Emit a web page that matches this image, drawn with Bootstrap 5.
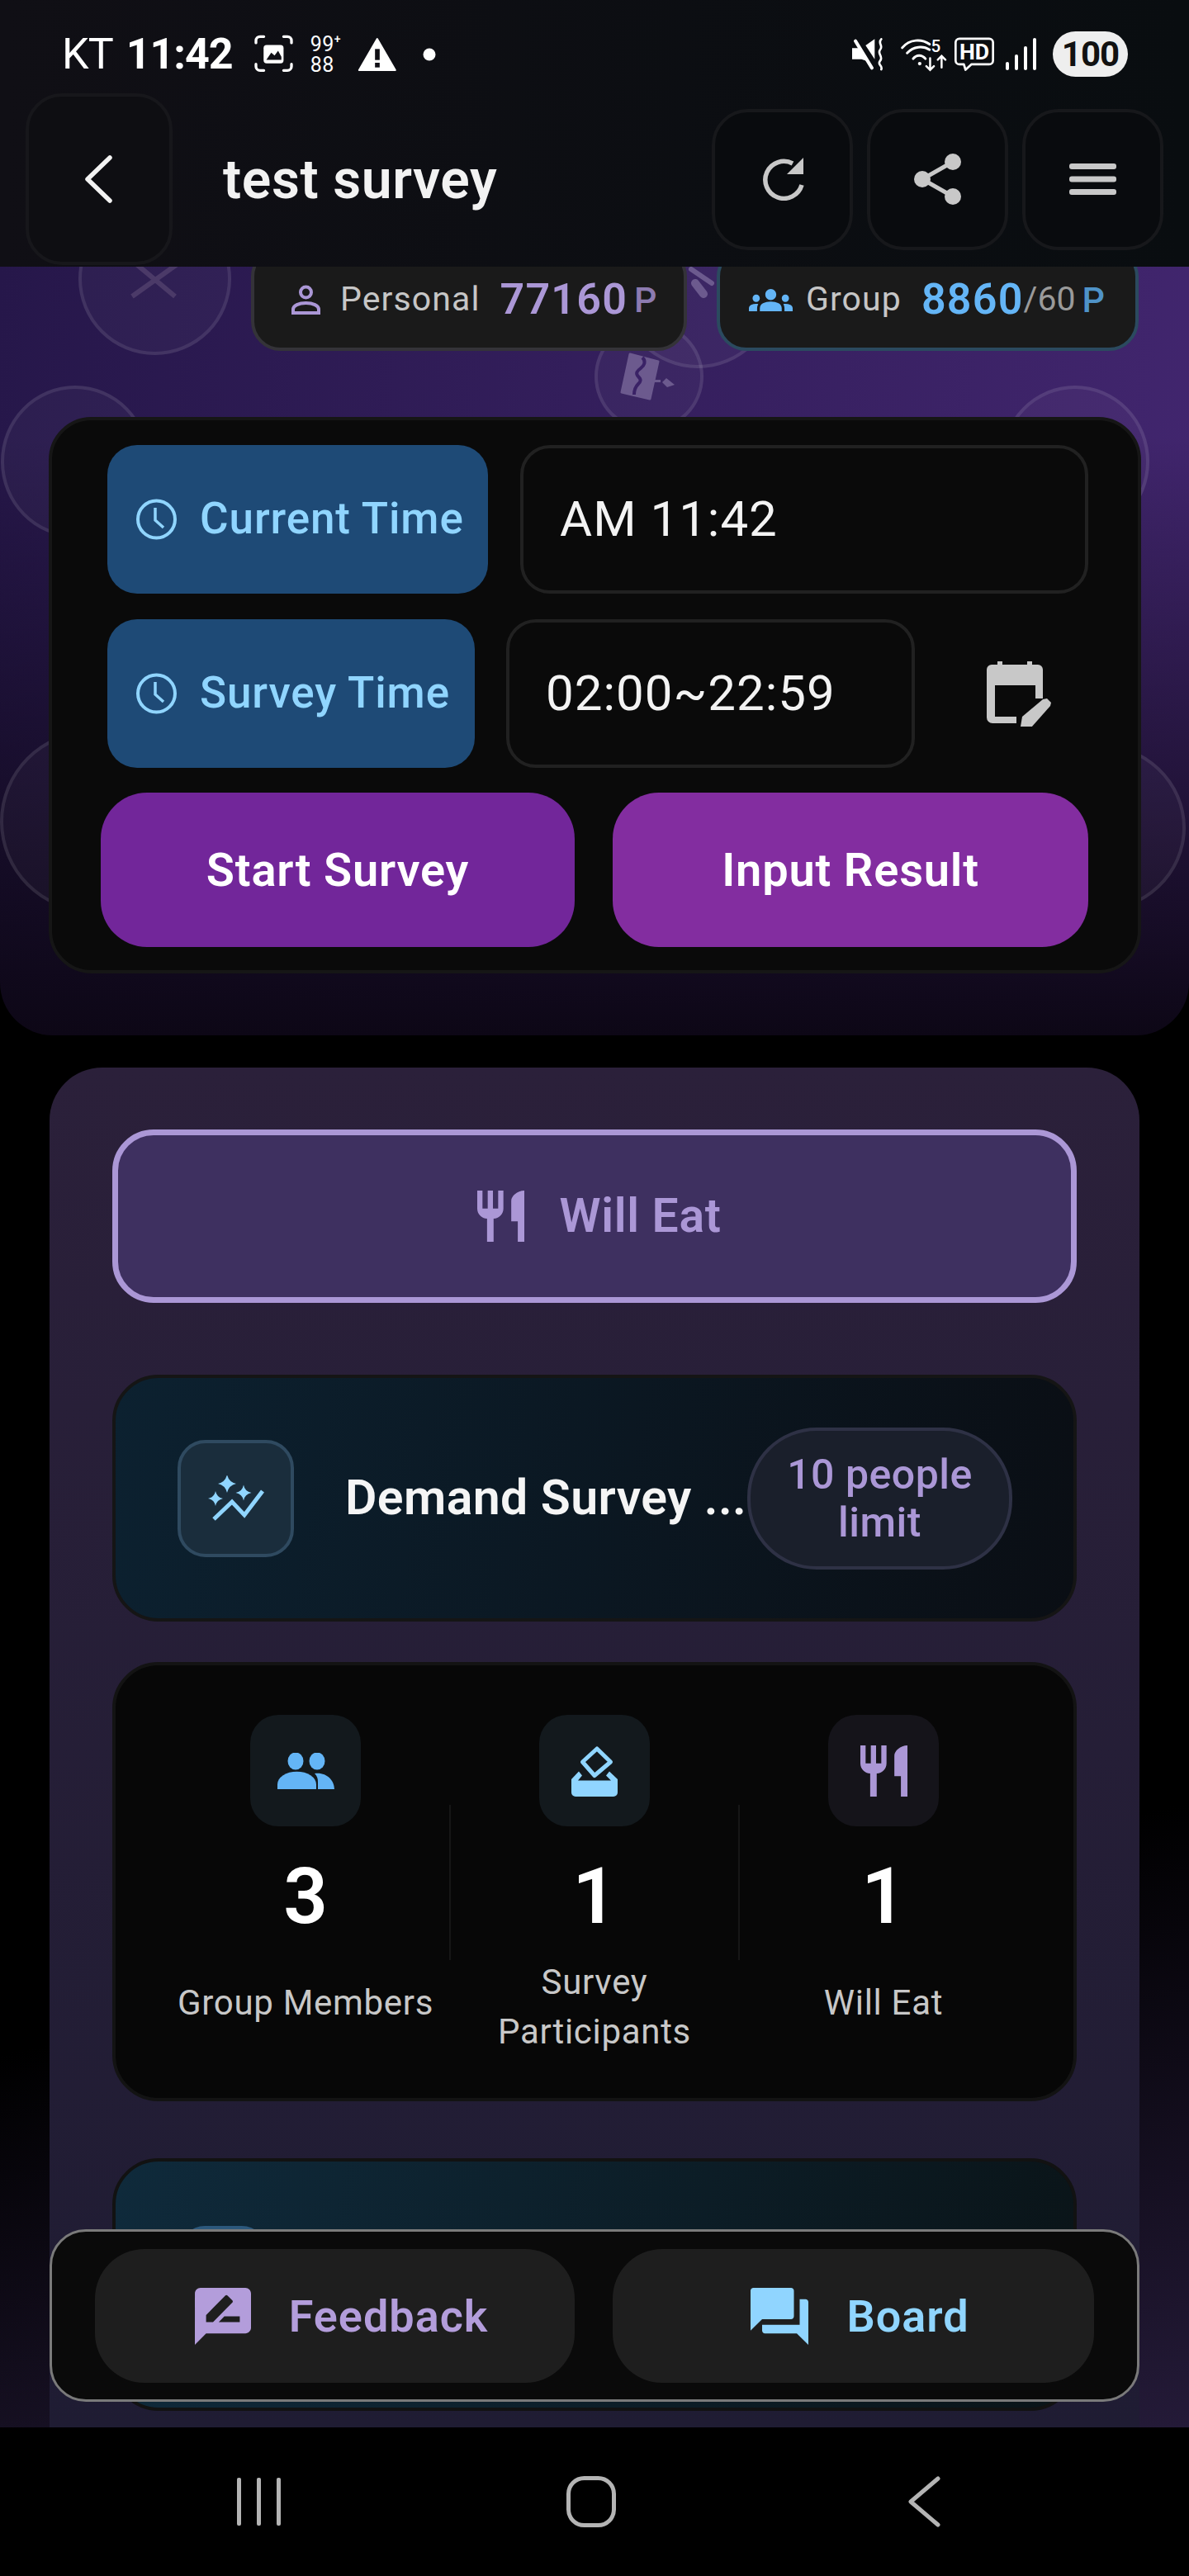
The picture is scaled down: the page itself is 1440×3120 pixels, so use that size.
<!DOCTYPE html>
<html lang="en">
<head>
<meta charset="UTF-8">
<meta name="viewport" content="width=device-width, initial-scale=1">
<title>test survey</title>
<link href="https://cdn.jsdelivr.net/npm/bootstrap@5.3.0/dist/css/bootstrap.min.css" rel="stylesheet">
<style>
    body { background: #000; font-family: Roboto, "Liberation Sans", sans-serif; margin: 0; }
    .screen { width: 1440px; height: 3120px; position: relative; overflow: hidden; background: #000; }

    /* top bar */
    .top-bar { height: 323px; flex-shrink: 0; position: relative; z-index: 5; background: linear-gradient(90deg, #100f15, #090d10); }
    .status-row { height: 113px; padding: 38px 74px 20px 75px; color: #fff; }
    .st-kt { font-size: 52px; font-weight: 400; line-height: 55px; margin-right: 16px; letter-spacing: -1px; }
    .st-time { font-size: 52px; font-weight: 700; line-height: 55px; letter-spacing: -1px; margin-right: 26px; }
    .st-count { font-size: 25px; line-height: 25px; width: 38px; margin: 0 19px 0 21px; letter-spacing: .5px; font-weight: 400; white-space: nowrap; }
    .st-count sup { font-size: 14px; font-weight: 500; top: -.7em; letter-spacing: 0; }
    .st-dot { margin-left: 31px; }
    .st-batt { width: 91px; height: 55px; border-radius: 28px; background: #eee; color: #111; font-size: 42px; font-weight: 700; letter-spacing: -1px; line-height: 55px; text-align: center; margin-left: 20px; }
    .title-row { height: 208px; padding: 0 31px; }
    .back-box { width: 178px; height: 208px; border: 4px solid #17171b; border-radius: 44px; background: #0e0e12; }
    .page-title { font-size: 66px; font-weight: 600; color: #f2f2f2; margin-left: 61px; letter-spacing: .6px; }
    .head-btns { gap: 17px; }
    .square-box { width: 171px; height: 171px; border: 4px solid #17181b; border-radius: 44px; background: #090b0e; }

    /* purple hero */
    .hero { height: 931px; position: relative; overflow: hidden; border-radius: 0 0 64px 64px;
        background: linear-gradient(to bottom, rgba(10,6,18,0) 22%, #0d0716 100%), linear-gradient(95deg, #26174a, #42266f); }
    .deco { position: absolute; border-radius: 50%; border: 4px solid rgba(255,255,255,.09); background: rgba(255,255,255,.03); }
    .deco-icon { position: absolute; }
    .point-row { position: relative; margin: -24px 0 0 304px; gap: 36px; }
    .point-pill { height: 126px; padding-top: 2px; border-radius: 36px; background: #1a1a1a; border: 4px solid #343338; }
    .pill-personal { width: 528px; padding-left: 45px; }
    .pill-group { width: 511px; padding-left: 35px; border-color: #2b4a5f; }
    .pill-label { font-size: 41px; color: #c6c6c6; letter-spacing: 1.1px; }
    .pill-num { font-size: 52px; font-weight: 600; letter-spacing: 1.2px; }
    .purple-txt { color: #ab97d6; }
    .blue-txt { color: #64b5f6; }
    .pill-unit { font-size: 43px; font-weight: 500; }
    .pill-limit { font-size: 41px; color: #9a9a9a; }

    .time-card { position: relative; width: 1323px; height: 674px; margin: 80px 0 0 59px; padding: 30px 60px 0 59px;
        background: #0a0a0a; border: 4px solid #161616; border-radius: 52px; }
    .time-chip { height: 180px; border-radius: 36px; background: #1e4a76; color: #90d5ff; font-size: 53px; font-weight: 500; letter-spacing: .9px; padding-left: 34px; gap: 27px; white-space: nowrap; }
    .time-val { height: 180px; border: 4px solid #212121; border-radius: 36px; color: #f3f3f3; font-size: 60px; letter-spacing: 1px; padding-left: 44px; }
    .action-btn { height: 187px; border: 0; border-radius: 56px; color: #fff; font-size: 56px; font-weight: 600; letter-spacing: .8px; }
    .action-btn:hover { color: #fff; }

    /* lower panel */
    .below { height: 1686px; flex-shrink: 0; background: linear-gradient(168deg, #000 62%, #241a38 100%); padding: 39px 0 0 60px; }
    .panel { width: 1320px; height: 1647px; padding: 75px 76px 0; border-radius: 64px 64px 0 0; background: linear-gradient(#2b203a, #1f1c33); }
    .eat-btn { height: 210px; padding-left: 24px; border: 7px solid #ab97d6; border-radius: 50px; background: #3e3060; color: #ab97d6; font-size: 57px; font-weight: 600; letter-spacing: .7px; gap: 42px; }
    .eat-btn:hover { color: #ab97d6; background: #3e3060; border-color: #ab97d6; }
    .demand-card { height: 299px; margin-top: 87px; padding: 0 75px; border: 4px solid #151515; border-radius: 56px; background: linear-gradient(100deg, #0c2130, #0a0e14); }
    .spark-box { width: 141px; height: 142px; border: 4px solid #2f4a60; border-radius: 34px; background: #1a2d3c; }
    .demand-title { width: 487px; margin-left: 62px; font-size: 59px; font-weight: 600; letter-spacing: .4px; color: #f5f5f5; white-space: nowrap; }
    .limit-pill { width: 321px; height: 172px; border: 4px solid #2e3145; border-radius: 84px; background: #1a1f2b; color: #ab97d6; font-size: 50px; font-weight: 500; letter-spacing: .5px; line-height: 58px; text-align: center; }
    .stats-card { height: 532px; margin-top: 49px; padding: 60px 56px 0; border: 4px solid #131313; border-radius: 56px; background: #070707; }
    .stat-col { width: 349px; }
    .stat-icon { width: 134px; height: 135px; border-radius: 34px; }
    .stat-num { height: 159px; font-size: 94px; font-weight: 600; color: #fff; line-height: 170px; }
    .stat-label { height: 120px; font-size: 42px; letter-spacing: .7px; line-height: 60px; color: #c8c8c8; text-align: center; }
    .stat-label.one-line { padding-bottom: 10px; }
    .stat-line { width: 2px; height: 188px; margin-top: 109px; background: #161616; flex-shrink: 0; }
    .next-card { height: 306px; margin-top: 69px; padding: 78px 0 0 78px; border: 4px solid #121212; border-radius: 56px; background: linear-gradient(100deg, #0f2a3b, #0a1418); }
    .next-box { width: 105px; height: 110px; border-radius: 30px; background: #2c587c; }

    /* floating bottom buttons */
    .float-bar { position: absolute; left: 60px; top: 2700px; width: 1320px; height: 209px; z-index: 4; padding: 21px 52px 0; gap: 46px; border: 3px solid #7a7a7a; border-radius: 44px; background: #0a0a0a; }
    .float-btn { height: 162px; padding-left: 28px; border: 0; border-radius: 60px; background: #1e1e1e; font-size: 54px; font-weight: 600; gap: 46px; letter-spacing: 1px; }
    .float-btn:hover { background: #1e1e1e; }
    .fb-purple, .fb-purple:hover { width: 581px; color: #b39ddb; }
    .fb-blue, .fb-blue:hover { width: 583px; color: #90d5ff; }
    .sys-nav { height: 180px; background: #000; padding: 0 301px 0 287px; }
</style>
</head>
<body>
<div class="screen d-flex flex-column">

    <div class="top-bar">
        <div class="status-row d-flex align-items-center">
            <span class="st-kt">KT</span>
            <span class="st-time">11:42</span>
            <svg class="flex-shrink-0" width="47" height="47" viewBox="18 40 142 142" fill="none" stroke="#fff" stroke-width="10" stroke-linecap="round">
                <path d="M24 70V62a15 15 0 0 1 15-15h14M125 47h14a15 15 0 0 1 15 15v8M154 148v8a15 15 0 0 1-15 15h-14M53 171H39a15 15 0 0 1-15-15v-8"/>
                <rect x="52" y="78" width="73" height="67" rx="11" fill="#fff" stroke="none"/>
                <path d="M62 132l18-26 12 10 13-17 12 22v11z" fill="#100f15" stroke="none"/>
            </svg>
            <span class="st-count">99<sup>+</sup><br>88</span>
            <svg class="flex-shrink-0" width="48" height="42" viewBox="395 42 143 126">
                <path d="M466 48L532 162H400z" fill="#fff" stroke="#fff" stroke-width="6" stroke-linejoin="round"/>
                <rect x="458" y="85" width="17" height="40" fill="#100f15"/><rect x="458" y="135" width="17" height="17" fill="#100f15"/>
            </svg>
            <svg class="st-dot flex-shrink-0" width="16" height="16" viewBox="0 0 16 16"><circle cx="8" cy="8" r="7.500" fill="#fff"/></svg>

            <div class="ms-auto d-flex align-items-center">
                <svg class="flex-shrink-0" style="margin-right:18px" width="42" height="40" viewBox="30 51 126 120" fill="#fff">
                    <path d="M36 88h26l28 47-20-7H36z"/>
                    <path d="M85 78l33-23v73z"/>
                    <path d="M48 62l60 98" stroke="#fff" stroke-width="12" stroke-linecap="round"/>
                    <path d="M142 55c-15 15 10 25-5 40-10 15 15 25 0 40-10 15 11 15 5 30" fill="none" stroke="#fff" stroke-width="8" stroke-linecap="round"/>
                </svg>
                <svg class="flex-shrink-0" style="margin-right:7px" width="58" height="42" viewBox="210 50 175 125" fill="none" stroke="#fff" stroke-width="9" stroke-linecap="round">
                    <path d="M218 88c27-33 72-33 100-13M236 107c24-25 58-27 82-12M258 128c12-16 32-16 45 0"/>
                    <circle cx="282" cy="146" r="6.500" fill="#fff" stroke="none"/>
                    <path d="M320 126v42M306 155l14 14 14-14M362 160v-40M348 132l14-14 14 14" stroke-width="7.500"/>
                    <text x="323" y="102" fill="#fff" stroke="none" font-size="62" font-weight="500" font-family="Roboto">5</text>
                </svg>
                <svg class="flex-shrink-0" style="margin-right:13px" width="50" height="42" viewBox="405 50 150 125" fill="none" stroke="#fff" stroke-width="8" stroke-linejoin="round">
                    <path d="M426 55h108a14 14 0 0 1 14 14v65a14 14 0 0 1-14 14h-64l-22 20-6-20h-16a14 14 0 0 1-14-14V69a14 14 0 0 1 14-14z"/>
                    <text x="480" y="129" text-anchor="middle" fill="#fff" stroke="none" font-size="80" font-weight="700" font-family="Roboto">HD</text>
                </svg>
                <svg class="flex-shrink-0" width="37" height="40" viewBox="0 0 37 40" fill="#fff">
                    <rect x="0" y="29" width="4" height="10" rx="2"/><rect x="11" y="20" width="4" height="19" rx="2"/><rect x="22" y="10" width="4" height="29" rx="2"/><rect x="33" y="0" width="4" height="39" rx="2"/>
                </svg>
                <div class="st-batt">100</div>
            </div>
        </div>
        <div class="title-row d-flex align-items-center">
            <div class="back-box d-flex align-items-center justify-content-center">
                <svg width="36" height="58" viewBox="0 0 36 58" fill="none" stroke="#f2f2f2" stroke-width="5.500" stroke-linecap="round" stroke-linejoin="round"><path d="M31 3L4 29l27 26"/></svg>
            </div>
            <div class="page-title">test survey</div>
            <div class="head-btns ms-auto d-flex">
                <div class="square-box d-flex align-items-center justify-content-center">
                    <svg width="52" height="52" viewBox="0 0 52 52" fill="none" stroke="#c8c8c8" stroke-width="5.500"><path d="M49 33A22.500 22.500 0 1 1 38 7"/><path d="M51 0v20H31z" fill="#c8c8c8" stroke="none"/></svg>
                </div>
                <div class="square-box d-flex align-items-center justify-content-center">
                    <svg width="58" height="62" viewBox="0 0 58 62" fill="#c8c8c8"><path d="M47 10L10 31l37 21" fill="none" stroke="#c8c8c8" stroke-width="5"/><circle cx="47" cy="10" r="10"/><circle cx="10" cy="31" r="10"/><circle cx="47" cy="52" r="10"/></svg>
                </div>
                <div class="square-box d-flex align-items-center justify-content-center">
                    <svg width="57" height="38" viewBox="0 0 57 38" fill="#c8c8c8"><rect width="57" height="7" rx="3"/><rect y="15.500" width="57" height="7" rx="3"/><rect y="31" width="57" height="7" rx="3"/></svg>
                </div>
            </div>
        </div>
    </div>

    <div class="hero flex-shrink-0">
        <div class="deco" style="left:95px;top:-78px;width:185px;height:185px"></div>
        <svg class="deco-icon" style="left:155px;top:-24px" width="70" height="66" viewBox="0 0 70 66" stroke="#4b3a68" stroke-width="6" fill="none"><path d="M5 60L61 20M57 60L9 20"/></svg>
        <div class="deco" style="left:750px;top:-67px;width:190px;height:190px"></div>
        <svg class="deco-icon" style="left:833px;top:0" width="34" height="40" viewBox="0 0 34 40" fill="none" stroke="#6c5a8e" stroke-linecap="round"><path d="M4 3l25 17" stroke-width="6"/><path d="M9 20l10 13" stroke-width="10"/></svg>
        <div class="deco" style="left:720px;top:67px;width:132px;height:132px"></div>
        <svg class="deco-icon" style="left:750px;top:104px" width="70" height="60" viewBox="0 0 70 60">
            <path d="M13 2l34 9-10 45-34-8z" fill="#6c5a8e" stroke="#6c5a8e" stroke-width="3" stroke-linejoin="round"/>
            <path d="M28 6c5 5 2 10-2 13s-7 6-3 10 3 6 0 9-5 7-5 13" fill="none" stroke="#3a2266" stroke-width="4"/>
            <path d="M42 33h8v3h-8zM52 36l5-5 10 8-9 3z" fill="#6c5a8e"/>
        </svg>
        <div class="deco" style="left:1px;top:144px;width:180px;height:184px"></div>
        <div class="deco" style="left:1212px;top:144px;width:180px;height:184px"></div>
        <div class="deco" style="left:0;top:562px;width:220px;height:220px"></div>
        <div class="deco" style="left:1220px;top:577px;width:216px;height:205px"></div>

        <div class="point-row d-flex">
            <div class="point-pill pill-personal d-flex align-items-center">
                <svg width="35" height="36" viewBox="0 0 35 36" fill="none" stroke="#ab97d6" stroke-width="4"><circle cx="17.500" cy="9" r="6.500"/><path d="M2 34v-4c0-5 7-8 15.500-8S33 25 33 30v4z"/></svg>
                <span class="pill-label ms-4">Personal</span>
                <span class="pill-num purple-txt ms-4">77160</span>
                <span class="pill-unit ms-2" style="color:#8d7bb0">P</span>
            </div>
            <div class="point-pill pill-group d-flex align-items-center">
                <svg width="53" height="27" viewBox="0 6 24 12" preserveAspectRatio="none" fill="#64b5f6"><path d="M12 12.750c1.630 0 3.070.39 4.240.9 1.080.48 1.760 1.560 1.760 2.730V18H6v-1.610c0-1.180.68-2.260 1.760-2.730 1.170-.52 2.610-.91 4.240-.91zM4 13c1.100 0 2-.9 2-2s-.9-2-2-2-2 .9-2 2 .9 2 2 2zm1.130 1.100C4.760 14.040 4.390 14 4 14c-.99 0-1.930.21-2.780.58C.48 14.900 0 15.620 0 16.430V18h4.500v-1.610c0-.83.23-1.610.63-2.290zM20 13c1.100 0 2-.9 2-2s-.9-2-2-2-2 .9-2 2 .9 2 2 2zm4 3.430c0-.81-.48-1.530-1.220-1.850-.85-.37-1.790-.58-2.780-.58-.39 0-.76.04-1.130.1.4.68.63 1.460.63 2.290V18H24v-1.570zM12 12c-1.660 0-3-1.340-3-3s1.340-3 3-3 3 1.340 3 3-1.340 3-3 3z"/></svg>
                <span class="pill-label ms-3">Group</span>
                <span class="pill-num blue-txt ms-4">8860</span>
                <span class="pill-limit">/60</span>
                <span class="pill-unit ms-2" style="color:#4f93c8">P</span>
            </div>
        </div>

        <div class="time-card d-flex flex-column">
            <div class="d-flex ps-2" style="gap:39px">
                <div class="time-chip d-flex align-items-center" style="width:461px">
                    <svg width="51" height="50" viewBox="0 0 51 50" fill="none" stroke="#90d5ff" stroke-width="4"><circle cx="25.500" cy="25" r="22.500"/><path d="M24 11v15l10 9" stroke-width="3.500"/></svg>
                    <span>Current Time</span>
                </div>
                <div class="time-val flex-grow-1 d-flex align-items-center">AM 11:42</div>
            </div>
            <div class="d-flex ps-2 align-items-center" style="gap:38px;margin-top:31px">
                <div class="time-chip d-flex align-items-center" style="width:445px">
                    <svg width="51" height="50" viewBox="0 0 51 50" fill="none" stroke="#90d5ff" stroke-width="4"><circle cx="25.500" cy="25" r="22.500"/><path d="M24 11v15l10 9" stroke-width="3.500"/></svg>
                    <span>Survey Time</span>
                </div>
                <div class="time-val d-flex align-items-center" style="width:495px">02:00~22:59</div>
                <svg style="margin-left:49px" width="78" height="79" viewBox="0 0 78 79" fill="#c8c8c8">
                    <path d="M0 10a6 6 0 0 1 6-6h7V0h6v4h30V0h6v4h7a6 6 0 0 1 6 6v19H0z"/>
                    <path d="M0 29h10v38h26v8H7a7 7 0 0 1-7-7zM59 29h9v16h-9z"/>
                    <path d="M41 79l2-12 25-21 5-1 5 5-1 4-23 26z"/>
                </svg>
            </div>
            <div class="d-flex" style="gap:46px;margin-top:30px">
                <button class="btn action-btn d-flex align-items-center justify-content-center" style="width:574px;background:#72269a">Start Survey</button>
                <button class="btn action-btn d-flex align-items-center justify-content-center" style="width:576px;background:#832da0">Input Result</button>
            </div>
        </div>
    </div>

    <div class="below">
        <div class="panel">
            <button class="btn eat-btn w-100 d-flex align-items-center justify-content-center">
                <svg width="57" height="62" viewBox="3 2 18 20" preserveAspectRatio="none" fill="#ab97d6"><path d="M11 9H9V2H7v7H5V2H3v7c0 2.120 1.660 3.840 3.750 3.970V22h2.500v-9.030C11.340 12.840 13 11.120 13 9V2h-2v7zm5-3v8h2.500v8H21V2c-2.760 0-5 2.240-5 4z"/></svg>
                <span>Will Eat</span>
            </button>

            <div class="demand-card d-flex align-items-center">
                <div class="spark-box d-flex align-items-center justify-content-center flex-shrink-0">
                    <svg width="69" height="56" viewBox="15 13 69 56" fill="#90d5ff">
                        <path d="M39 12Q41 21 50 23Q41 25 39 34Q37 25 28 23Q37 21 39 12z"/>
                        <path d="M59 24.500Q60.500 32.500 68.500 34Q60.500 35.500 59 43.500Q57.500 35.500 49.500 34Q57.500 32.500 59 24.500z"/>
                        <path d="M25 32Q26.500 39.500 34 41Q26.500 42.500 25 50Q23.500 42.500 16 41Q23.500 39.500 25 32z"/>
                        <path d="M23 66l22-21 15 16 22-29" fill="none" stroke="#90d5ff" stroke-width="5"/>
                    </svg>
                </div>
                <div class="demand-title flex-shrink-0">Demand Survey ...</div>
                <div class="limit-pill d-flex align-items-center justify-content-center flex-shrink-0">10 people<br>limit</div>
            </div>

            <div class="stats-card d-flex">
                <div class="stat-col d-flex flex-column align-items-center">
                    <div class="stat-icon d-flex align-items-center justify-content-center" style="background:#13191d">
                        <svg width="69" height="44" viewBox="0 0 69 44" fill="#64b5f6"><ellipse cx="22" cy="10" rx="9.500" ry="10.500"/><ellipse cx="48" cy="10" rx="9.500" ry="10.500"/><path d="M0 44v-6a23 15 0 0 1 47 0v6z"/><path d="M49 44v-9c0-4-1-7-4-10 14-2 24 8 24 19z"/></svg>
                    </div>
                    <div class="stat-num">3</div>
                    <div class="stat-label one-line d-flex align-items-center">Group Members</div>
                </div>
                <div class="stat-line"></div>
                <div class="stat-col d-flex flex-column align-items-center">
                    <div class="stat-icon d-flex align-items-center justify-content-center" style="background:#13191d">
                        <svg width="56" height="63" viewBox="12 12 56 63" fill="#90d5ff">
                            <path d="M43 17l16.500 16L40 49.500 25.500 33z" fill="none" stroke="#90d5ff" stroke-width="5" stroke-linejoin="round"/>
                            <path d="M21 44.500L12 54v16a5 5 0 0 0 5 5h46a5 5 0 0 0 5-5V54l-10-9.500-4 5 6 6H20l5-6z"/>
                        </svg>
                    </div>
                    <div class="stat-num">1</div>
                    <div class="stat-label d-flex align-items-center">Survey<br>Participants</div>
                </div>
                <div class="stat-line"></div>
                <div class="stat-col d-flex flex-column align-items-center">
                    <div class="stat-icon d-flex align-items-center justify-content-center" style="background:#15141a">
                        <svg width="57" height="62" viewBox="3 2 18 20" preserveAspectRatio="none" fill="#ab97d6"><path d="M11 9H9V2H7v7H5V2H3v7c0 2.120 1.660 3.840 3.750 3.970V22h2.500v-9.030C11.340 12.840 13 11.120 13 9V2h-2v7zm5-3v8h2.500v8H21V2c-2.760 0-5 2.240-5 4z"/></svg>
                    </div>
                    <div class="stat-num">1</div>
                    <div class="stat-label one-line d-flex align-items-center">Will Eat</div>
                </div>
            </div>

            <div class="next-card">
                <div class="next-box"></div>
            </div>
        </div>
    </div>

    <div class="float-bar d-flex">
        <button class="btn float-btn fb-purple d-flex align-items-center justify-content-center">
            <svg width="68" height="69" viewBox="2 2 20 20" preserveAspectRatio="none" fill="#b39ddb"><path d="M20 2H4c-1.100 0-1.990.9-1.990 2L2 22l4-4h14c1.100 0 2-.9 2-2V4c0-1.100-.9-2-2-2zM6 14v-2.470l6.880-6.880c.2-.2.51-.2.71 0l1.770 1.770c.2.2.2.51 0 .71L8.470 14H6zm12 0h-7.500l2-2H18v2z"/></svg>
            <span>Feedback</span>
        </button>
        <button class="btn float-btn fb-blue d-flex align-items-center justify-content-center">
            <svg width="70" height="69" viewBox="2 2 20 20" preserveAspectRatio="none" fill="#90d5ff"><path d="M21 6h-2v9H6v2c0 .55.45 1 1 1h11l4 4V7c0-.55-.45-1-1-1zm-4 6V3c0-.55-.45-1-1-1H3c-.55 0-1 .45-1 1v14l4-4h10c.55 0 1-.45 1-1z"/></svg>
            <span>Board</span>
        </button>
    </div>

    <div class="sys-nav d-flex align-items-center justify-content-between flex-shrink-0">
        <svg width="53" height="58" viewBox="0 0 53 58" fill="#b4b4b4"><rect x="0" y="0" width="5" height="58" rx="2"/><rect x="24" y="0" width="5" height="58" rx="2"/><rect x="48" y="0" width="5" height="58" rx="2"/></svg>
        <svg class="me-2" width="60" height="62" viewBox="0 0 60 62" fill="none" stroke="#b4b4b4" stroke-width="5"><rect x="2.500" y="2.500" width="55" height="57" rx="19"/></svg>
        <svg width="40" height="62" viewBox="0 0 40 62" fill="none" stroke="#b4b4b4" stroke-width="5" stroke-linecap="round" stroke-linejoin="round"><path d="M37 3L4 31l33 28"/></svg>
    </div>
</div>
<script src="https://cdn.jsdelivr.net/npm/bootstrap@5.3.0/dist/js/bootstrap.bundle.min.js"></script>
</body>
</html>
